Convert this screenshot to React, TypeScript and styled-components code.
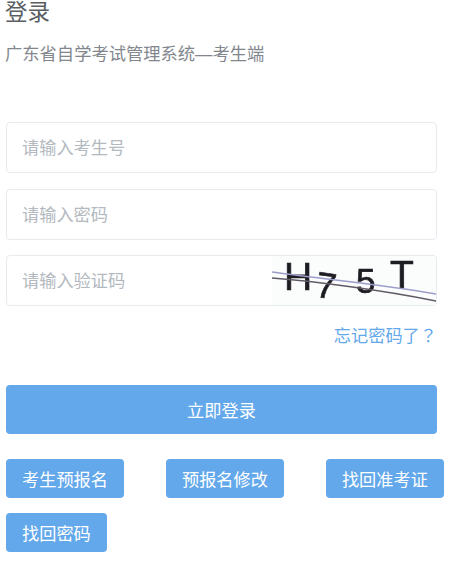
import React from 'react'
import styled, { createGlobalStyle } from 'styled-components'

const GlobalStyle = createGlobalStyle`
  html, body {
    margin: 0;
    padding: 0;
    background: #fff;
    font-family: "Liberation Sans", "Noto Sans CJK SC", sans-serif;
  }
`

const Page = styled.div`
  width: 476px;
  height: 570px;
  overflow: hidden;
  padding-left: 6px;
  box-sizing: border-box;
`

const Title = styled.h1`
  margin: 1px 0 0 -1px;
  font-size: 22.5px;
  line-height: 24px;
  font-weight: 400;
  color: #5a5e63;
`

const SubTitle = styled.p`
  margin: 17px 0 0 -1px;
  font-size: 17.3px;
  line-height: 24px;
  color: #82878e;
`

const Form = styled.div`
  width: 431px;
  margin-top: 56px;
  display: flex;
  flex-direction: column;
  gap: 15.5px;
`

const Field = styled.div`
  height: 51px;
  box-sizing: border-box;
  border: 1px solid #e6ebf0;
  border-radius: 4px;
  display: flex;
  align-items: center;
  justify-content: space-between;
  overflow: hidden;
`

const Input = styled.input`
  flex: 1;
  min-width: 0;
  height: 100%;
  border: 0;
  outline: 0;
  padding: 2px 0 0 15px;
  box-sizing: border-box;
  background: transparent;
  font: inherit;
  font-size: 17.2px;
  color: #4f5358;

  &::placeholder {
    color: #b3b9c0;
    opacity: 1;
  }
`

const Captcha = styled.svg`
  width: 164px;
  height: 49px;
  flex: none;
  background: #fbfcfc;
  filter: blur(0.4px);
`

const ForgotRow = styled.div`
  width: 431px;
  margin-top: 13px;
  height: 30px;
  display: flex;
  justify-content: flex-end;
  align-items: center;
`

const ForgotLink = styled.a`
  font-family: "Noto Sans CJK TC", sans-serif;
  font-size: 17.2px;
  color: #63a8eb;
  text-decoration: none;
`

const LoginButton = styled.button`
  width: 431px;
  height: 49px;
  margin-top: 36px;
  border: 0;
  border-radius: 4px;
  background: #63a8eb;
  color: #fff;
  font: inherit;
  font-size: 17.2px;
  display: block;
`

const LinkRow = styled.div`
  margin-top: 25px;
  display: flex;
  flex-wrap: wrap;
  row-gap: 15px;
  column-gap: 42px;
  width: 470px;
`

const LinkButton = styled.button`
  height: 39px;
  padding: 0 16px;
  border: 0;
  border-radius: 4px;
  background: #63a8eb;
  color: #fff;
  font: inherit;
  font-size: 17.2px;
  white-space: nowrap;
`

const CaptchaImage = () => (
  <Captcha viewBox="0 0 164 49" role="img" aria-label="验证码">
    <g fontFamily="'Liberation Sans', sans-serif" fill="#1c1c22" stroke="#1c1c22" strokeWidth="0.7">
      <text x="12" y="34" fontSize="39">H</text>
      <text x="44" y="42" fontSize="36" transform="rotate(8 54 30)">7</text>
      <text x="84" y="37" fontSize="35">5</text>
      <text x="118" y="32" fontSize="39">T</text>
    </g>
    <path d="M0 16 C40 22 110 28 164 38" fill="none" stroke="#9d9dcc" strokeWidth="1.5" />
    <path d="M0 22 C40 25 110 34 164 45" fill="none" stroke="#5f5a64" strokeWidth="1.5" />
  </Captcha>
)

export default function App() {
  return (
    <Page>
      <GlobalStyle />
      <Title>登录</Title>
      <SubTitle>广东省自学考试管理系统—考生端</SubTitle>
      <Form>
        <Field>
          <Input placeholder="请输入考生号" />
        </Field>
        <Field>
          <Input placeholder="请输入密码" />
        </Field>
        <Field>
          <Input placeholder="请输入验证码" />
          <CaptchaImage />
        </Field>
      </Form>
      <ForgotRow>
        <ForgotLink href="#">忘记密码了？</ForgotLink>
      </ForgotRow>
      <LoginButton>立即登录</LoginButton>
      <LinkRow>
        <LinkButton>考生预报名</LinkButton>
        <LinkButton>预报名修改</LinkButton>
        <LinkButton>找回准考证</LinkButton>
        <LinkButton>找回密码</LinkButton>
      </LinkRow>
    </Page>
  )
}
